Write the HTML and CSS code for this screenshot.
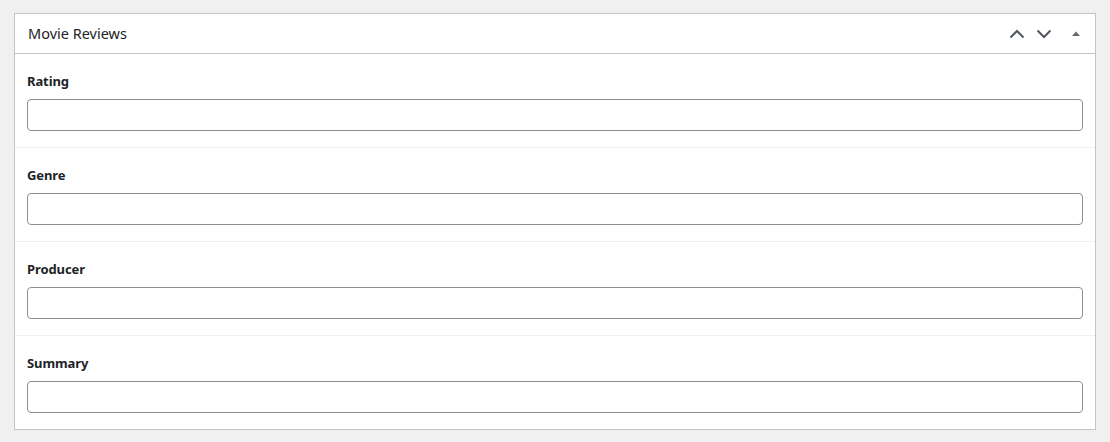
FILE: index.html
```html
<!DOCTYPE html>
<html lang="en">
<head>
<meta charset="utf-8">
<title>Movie Reviews</title>
<link rel="stylesheet" href="styles.css">
</head>
<body>
<div class="postbox">
  <div class="postbox-header">
    <h2 class="postbox-title">Movie Reviews</h2>
    <div class="handle-actions">
      <button class="handle-btn" aria-label="Move up">
        <svg width="16" height="10" viewBox="0 0 16 10"><path d="M1.5 8.5 L8 2 L14.5 8.5" fill="none" stroke="#50575e" stroke-width="2"/></svg>
      </button>
      <button class="handle-btn" aria-label="Move down">
        <svg width="16" height="10" viewBox="0 0 16 10"><path d="M1.5 1.5 L8 8 L14.5 1.5" fill="none" stroke="#50575e" stroke-width="2"/></svg>
      </button>
      <button class="handle-btn toggle" aria-label="Toggle panel">
        <svg width="8" height="5" viewBox="0 0 8 5"><path d="M0 5 L4 0.5 L8 5 Z" fill="#646970"/></svg>
      </button>
    </div>
  </div>
  <div class="inside">
    <div class="field">
      <label class="field-label">Rating</label>
      <input class="field-input" type="text">
    </div>
    <div class="field">
      <label class="field-label">Genre</label>
      <input class="field-input" type="text">
    </div>
    <div class="field">
      <label class="field-label">Producer</label>
      <input class="field-input" type="text">
    </div>
    <div class="field">
      <label class="field-label">Summary</label>
      <input class="field-input" type="text">
    </div>
  </div>
</div>
</body>
</html>
```

FILE: styles.css
```css
html, body {
  margin: 0;
  padding: 0;
  background: #f0f0f0;
}
body {
  padding: 13px 14px 0 14px;
  font-family: "Noto Sans", "Open Sans", "Liberation Sans", sans-serif;
  color: #1d2327;
}
.postbox {
  background: #fff;
  border: 1px solid #c3c4c7;
  box-shadow: 0 1px 1px rgba(0,0,0,0.04);
}
.postbox-header {
  display: flex;
  align-items: center;
  justify-content: space-between;
  height: 39px;
  border-bottom: 1px solid #c3c4c7;
  padding: 0 0 0 13px;
}
.postbox-title {
  margin: 0;
  font-size: 14.5px;
  font-weight: 400;
  line-height: 1.4;
  color: #1d2327;
}
.handle-actions {
  display: flex;
  align-items: center;
}
.handle-btn {
  display: flex;
  align-items: center;
  justify-content: center;
  width: 27px;
  height: 36px;
  padding: 0;
  margin: 0;
  border: 0;
  background: transparent;
}
.handle-btn.toggle {
  width: 38px;
}
.inside {
  display: flex;
  flex-direction: column;
}
.field {
  display: flex;
  flex-direction: column;
  padding: 18px 12px 16px 12px;
  border-top: 1px solid #f0f0f1;
}
.field:first-child {
  border-top: 0;
}
.field-label {
  font-size: 13px;
  font-weight: 700;
  line-height: 18px;
  color: #1d2327;
  margin-bottom: 9px;
  letter-spacing: -0.1px;
}
.field-input {
  box-sizing: border-box;
  height: 32px;
  width: 100%;
  margin: 0;
  border: 1px solid #8c8f94;
  border-radius: 4px;
  background: #fff;
  padding: 0 8px;
  font-family: inherit;
  font-size: 14px;
}
```
